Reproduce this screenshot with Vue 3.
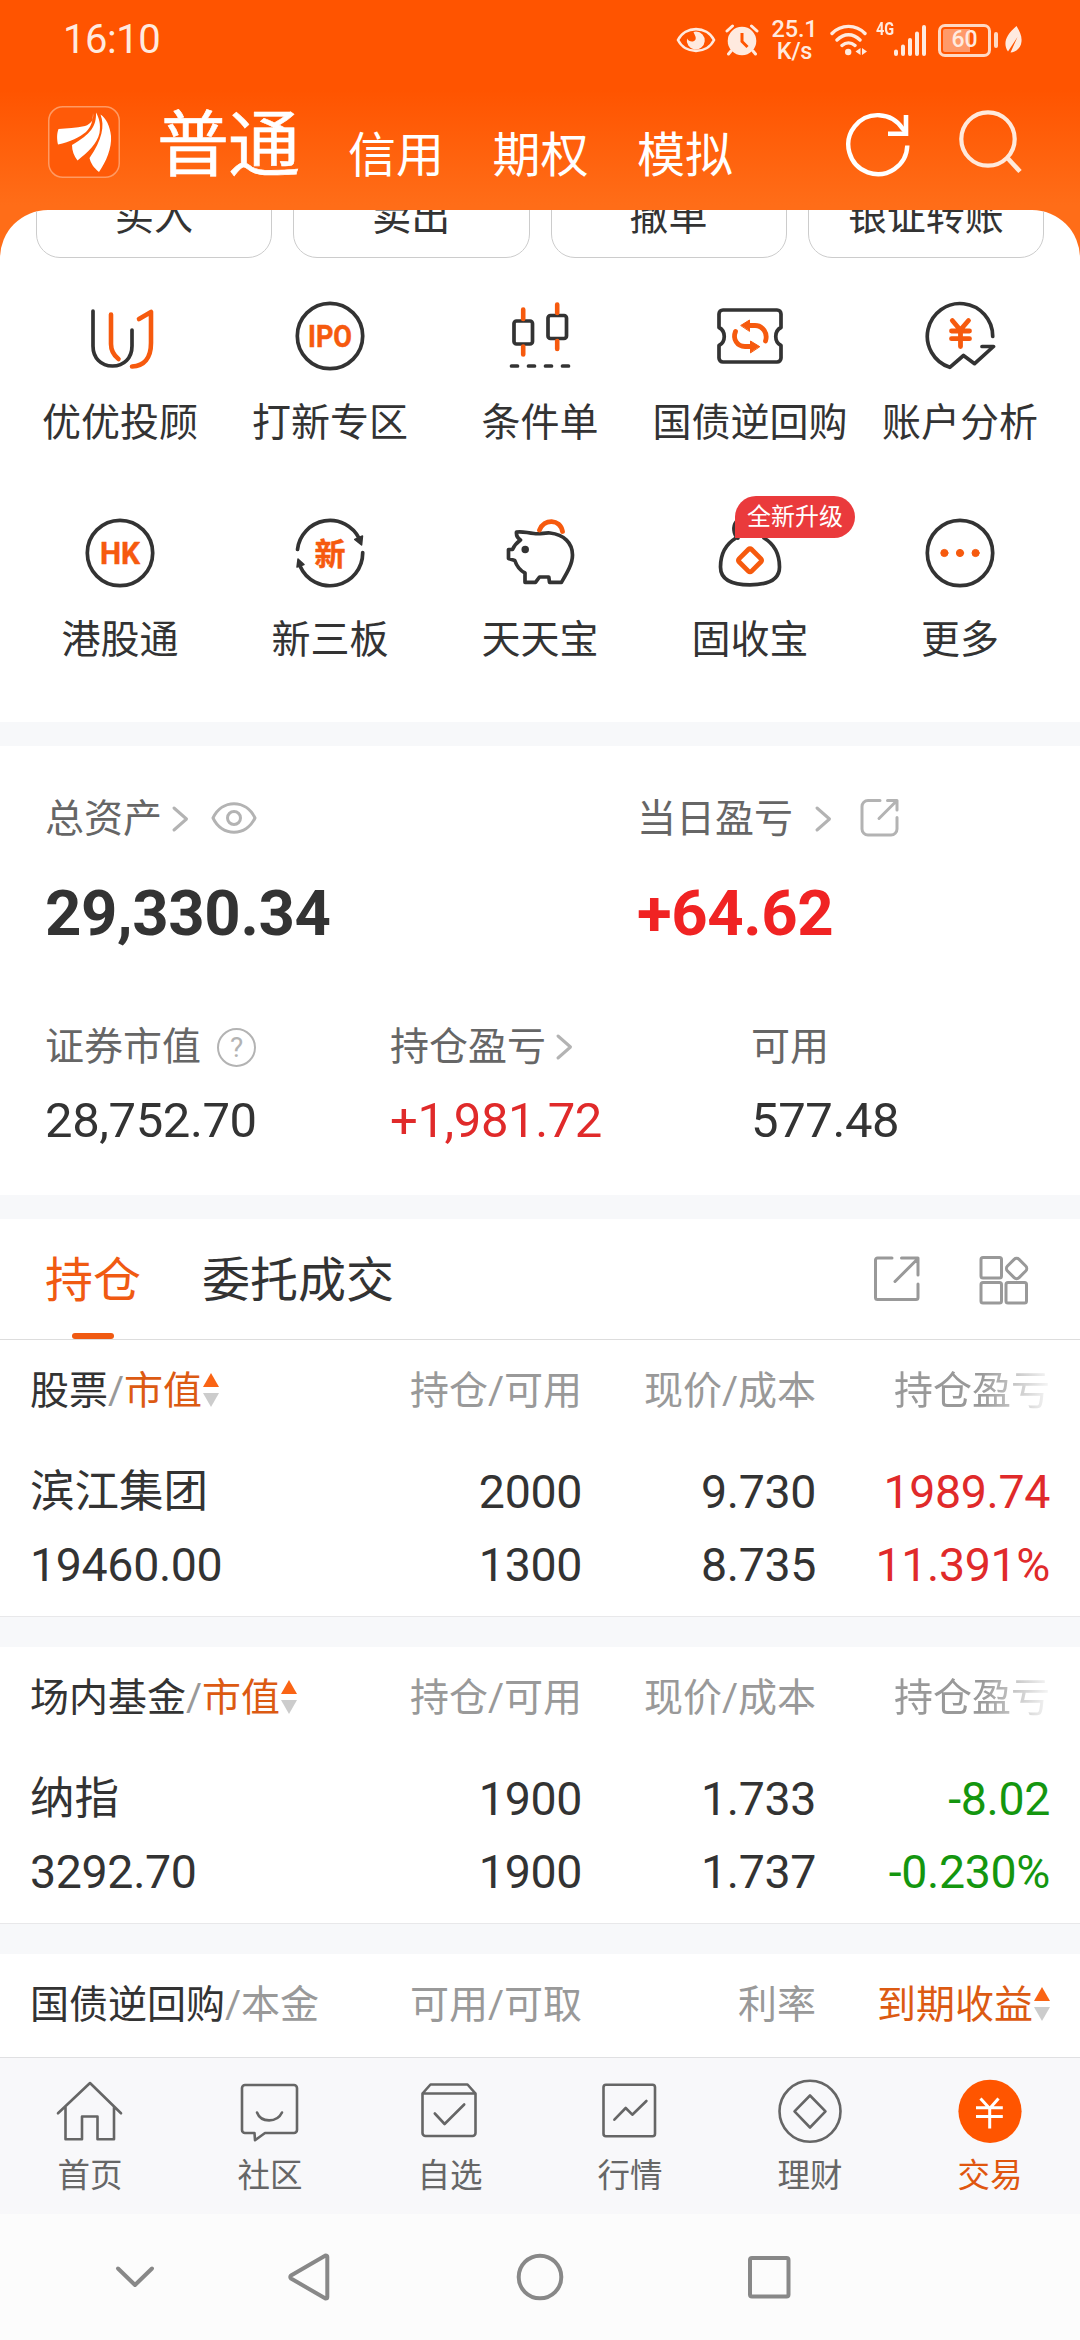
<script setup>
const accountTabs = ['信用', '期权', '模拟']
const actions = ['买入', '卖出', '撤单', '银证转账']

const ring = '<circle cx="36" cy="36" r="32.7"/>'
const services = [
  {
    label: '优优投顾',
    icon: '<path d="M9 11V46C9 58 17 66 28.5 66S48 58 48 46V30"/><g class="hot"><path d="M27 14.5V44c0 6 3 11.500 7.500 15"/><path d="M55 19L67 12V43C67 58 60 66 48 66.500"/></g>'
  },
  {
    label: '打新专区',
    icon: ring + '<text class="word" x="36" y="47.200" font-size="32" textLength="44" lengthAdjust="spacingAndGlyphs">IPO</text>'
  },
  {
    label: '条件单',
    icon: '<rect x="10" y="21" width="18.500" height="23" rx="2.500"/><rect x="44" y="15.500" width="18.500" height="23" rx="2.500"/><g class="hot"><path d="M19.200 9.500V19M19.200 46.500V54.500M53.200 4.500V13M53.200 41V49"/></g><path d="M7.500 66h6M24.500 66h6M41.500 66h6M58.500 66h6"/>'
  },
  {
    label: '国债逆回购',
    icon: '<path d="M9 10H63a4 4 0 0 1 4 4V27.500C60 31 60 42 67 45.500V58a4 4 0 0 1-4 4H9a4 4 0 0 1-4-4V45.500C12 42 12 31 5 27.500V14a4 4 0 0 1 4-4z"/><g class="hot bold"><path d="M34 25.500H41C49 25.500 54 33.500 51.500 41"/><path d="M21.500 31.500C18.500 39 23 46.500 31 46.500H38"/></g><path class="hotfill" d="M27 25.300L35.500 20V31zM45.500 46.500L36.500 41V52.500z"/>'
  },
  {
    label: '账户分析',
    icon: '<path d="M68.700 36.500A32.700 32.700 0 1 0 25.800 67.300L39.500 55.500L50.600 63.700L69.500 46.500H58"/><g class="hot bold"><path d="M28.300 20.500L36.300 30L44.500 20.500M27.500 31H45.500M27.500 38.700H45.500M36.500 31V46.500"/></g>'
  },
  {
    label: '港股通',
    icon: ring + '<text class="word" x="36" y="47.200" font-size="32" textLength="40" lengthAdjust="spacingAndGlyphs">HK</text>'
  },
  {
    label: '新三板',
    icon: '<path d="M3.500 32.500A32.700 32.700 0 0 1 65.500 22"/><path d="M68.700 35.500A32.700 32.700 0 0 1 6 49"/><path class="inkfill" d="M60.700 22.500L68.500 19L67.600 28zM4 42L10 47.500L3 50z"/><text class="word han" x="36" y="47.500" font-size="31">新</text>'
  },
  {
    label: '天天宝',
    icon: '<path d="M12.500 15C19 14 23 16 30 16.500C37 17.500 40 15.500 46 16C60 17.500 68.500 26 68.500 38C68.500 47 63 56 57.500 65.300H45.500L44.800 60H35.500L31.500 65.300H21V56C17 54 13 50 10.800 43.500L4.500 41.500V32.500H8.500C10 29 13 25.500 16.500 23C13.500 21 12 19 12.500 15z"/><circle class="inkfill" cx="21.200" cy="32.500" r="3"/><g class="hot bold"><path d="M35.500 13C40 1.500 56 1.500 58.500 14.500"/></g>'
  },
  {
    label: '固收宝',
    badge: '全新升级',
    icon: '<path d="M24 21C19 17 19 9 22 5"/><path d="M50 21C60 27 65.500 37 65.500 50C65.500 62 56 67.800 36 67.800S6.500 62 6.500 50C6.500 37 12 27 22 21"/><g class="hot bold"><rect x="27.200" y="34.500" width="17.600" height="17.600" rx="2" transform="rotate(45 36 43.300)"/></g>'
  },
  {
    label: '更多',
    icon: ring + '<g class="hotfill"><circle cx="20.400" cy="36" r="3.600"/><circle cx="36" cy="36" r="3.600"/><circle cx="51.600" cy="36" r="3.600"/></g>'
  }
]

const sections = [
  {
    title: '股票', sub: '市值', sorted: true,
    heads: ['持仓/可用', '现价/成本', '持仓盈亏'],
    rows: [
      ['滨江集团', '2000', '9.730', '1989.74'],
      ['19460.00', '1300', '8.735', '11.391%']
    ],
    tone: 'up'
  },
  {
    title: '场内基金', sub: '市值', sorted: true,
    heads: ['持仓/可用', '现价/成本', '持仓盈亏'],
    rows: [
      ['纳指', '1900', '1.733', '-8.02'],
      ['3292.70', '1900', '1.737', '-0.230%']
    ],
    tone: 'down'
  },
  {
    title: '国债逆回购', sub: '本金', sorted: false,
    heads: ['可用/可取', '利率', '到期收益'],
    rows: [],
    tone: ''
  }
]

const tabs = [
  { label: '首页', icon: '<path d="M4 38.300L36 8L67 38.300M11.500 32V64.200H28V41.500H43.500V64.200H60V32"/>' },
  { label: '社区', icon: '<path d="M11 10H60a3 3 0 0 1 3 3V55a3 3 0 0 1-3 3H31L21 65.200L20.500 58H11a3 3 0 0 1-3-3V13a3 3 0 0 1 3-3z"/><path d="M23 37.500C27 48 43 48 48 37.500"/>' },
  { label: '自选', icon: '<path d="M8.500 18.500H61.500V58a3 3 0 0 1-3 3H11.500a3 3 0 0 1-3-3zM8.500 18.500L16.500 9.500H53.500L61.500 18.500M20.800 38.500L30.600 49L50.200 29.500"/>' },
  { label: '行情', icon: '<rect x="9.500" y="9.700" width="51.500" height="51.500" rx="2.500"/><path d="M20.400 44.700L31.700 33L38.300 39.700L52.400 26"/>' },
  { label: '理财', icon: '<circle cx="36" cy="36.300" r="30.500"/><path d="M36 20.500L51.500 36.300L36 52.500L20.500 36.300z"/>' },
  { label: '交易', active: true, icon: '<circle class="disc" cx="36" cy="36.300" r="31.600"/><path class="yen" d="M26.500 23.500L35.700 33.500L44.500 23.500M22 32.800H48.800M22 41.600H48.800M35.700 33V53.500"/>' }
]
</script>

<template>
  <div class="screen">
    <header class="top">
      <div class="status">
        <span class="clock">16:10</span>
        <div class="indicators">
          <svg class="i-eye" width="40" height="30" viewBox="0 0 40 30">
            <path d="M2 15C9 .5 31 .5 38 15C31 29.500 9 29.500 2 15z" fill="none" stroke="#ffeadf" stroke-width="2.600" />
            <path d="M20 6.500A9 9 0 1 1 11 13.500C12.500 16.500 17.500 18 19.500 14.500C20.500 12 18.500 10 17.500 7z" fill="#ffeadf" />
          </svg>
          <svg class="i-alarm" width="34" height="32" viewBox="0 0 34 32">
            <circle cx="17" cy="17" r="14.300" fill="#ffeadf" />
            <path d="M2 7L7.500 2M32 7L26.500 2M6 27L3.500 30M28 27L30.500 30" stroke="#ffeadf" stroke-width="3" stroke-linecap="round" />
            <path d="M17 9V17.500L22.500 23" fill="none" stroke="#ff5400" stroke-width="3" />
          </svg>
          <div class="speed"><span>25.1</span><span>K/s</span></div>
          <svg class="i-wifi" width="38" height="32" viewBox="0 0 38 32">
            <g fill="none" stroke="#ffeadf" stroke-width="3.400" stroke-linecap="round">
              <path d="M2 9.500C11 0 26 0 35 9.500M7 16C14 9 23 9 30 16M12 21.500C16 18 21 18 25 21.500" />
            </g>
            <circle cx="18.200" cy="28" r="3.200" fill="#ffeadf" />
            <path d="M30.500 24V31L25.500 27.500zM32 31V24L37 27.500z" fill="#ffeadf" />
          </svg>
          <span class="gen">4G</span>
          <svg class="i-signal" width="34" height="32" viewBox="0 0 34 32">
            <path d="M3 27.500V30M10 22.500V30M17 16V30M24 9.500V30M31 3V30" stroke="#ffeadf" stroke-width="4" stroke-linecap="round" />
          </svg>
          <div class="battery"><span>60</span></div>
          <svg class="i-leaf" width="19" height="30" viewBox="0 0 19 30">
            <path d="M12.500 1C16 7 18 11 17.500 16.500C17 23 12 27 6.500 27.500L13.500 12L4 26.500C-1 19 1 11 12.500 1z" fill="#ffeadf" />
          </svg>
        </div>
      </div>

      <div class="titlebar">
        <svg class="logo" width="72" height="72" viewBox="0 0 72 72">
          <rect x=".75" y=".75" width="70.500" height="70.500" rx="14" fill="#ff5a08" stroke="#ff9a63" stroke-width="1.500" />
          <path d="M45 7C46 14 43 18 37 20C28 22 19 22 10.500 23C8.500 28 9 34 10 38.500C22 36 32 31 38 26C43 21 45 15 45 7z" fill="#fff" />
          <path d="M48 6.500C48.500 20 43 28 24 39C24 45 26 50 29.500 54.500C40 46 49 38 51.500 27C53 18 51 12 48 6.500z" fill="#fff" />
          <path d="M52.500 8.500C57 20 54 34 41.500 52C42.500 57 46 62 51 66C58 56 64 42 63 30C62 20 58 12 52.500 8.500z" fill="#fff" />
        </svg>
        <h1>普通</h1>
        <nav class="accounts"><span v-for="t in accountTabs" :key="t">{{ t }}</span></nav>
        <svg class="refresh" width="68" height="68" viewBox="0 0 68 68">
          <path d="M62.300 35.500A29.500 29.500 0 1 1 57.500 18.500L61.500 23" fill="none" stroke="#fff" stroke-width="4.400" />
          <path d="M61 5V23.800H43" fill="none" stroke="#fff" stroke-width="4.600" />
        </svg>
        <svg class="search" width="68" height="68" viewBox="0 0 68 68">
          <circle cx="31" cy="30" r="26.700" fill="none" stroke="#ffe9db" stroke-width="4.200" />
          <path d="M50 48.500L63 62.500" stroke="#ffe9db" stroke-width="4.600" />
        </svg>
      </div>
    </header>

    <main class="sheet">
      <div class="actions"><span v-for="a in actions" :key="a">{{ a }}</span></div>

      <section class="services">
        <div v-for="s in services" :key="s.label" class="service">
          <svg class="glyph" width="72" height="72" viewBox="0 0 72 72" v-html="s.icon"></svg>
          <span>{{ s.label }}</span>
          <em v-if="s.badge" class="badge">{{ s.badge }}</em>
        </div>
      </section>

      <section class="assets">
        <div class="summary">
          <div>
            <div class="label">总资产
              <svg class="chev" width="18" height="28" viewBox="0 0 18 28"><path d="M3 3L15.500 14L3 25" /></svg>
              <svg class="eye" width="46" height="34" viewBox="0 0 46 34"><path d="M2 17C11-2 35-2 44 17C35 36 11 36 2 17z" /><circle cx="23" cy="17" r="6.500" /></svg>
            </div>
            <strong>29,330.34</strong>
          </div>
          <div>
            <div class="label">当日盈亏
              <svg class="chev wide" width="18" height="28" viewBox="0 0 18 28"><path d="M3 3L15.500 14L3 25" /></svg>
              <svg class="ext" width="40" height="40" viewBox="0 0 40 40"><path d="M20 2.500H8A6 6 0 0 0 2 8.500V31A6 6 0 0 0 8 37H31A6 6 0 0 0 37 31V19.500M19 20.500L36 3.500M27.500 2.500H37V12" /></svg>
            </div>
            <strong class="gain">+64.62</strong>
          </div>
        </div>
        <div class="breakdown">
          <div>
            <div class="label">证券市值
              <span class="help">?</span>
            </div>
            <b>28,752.70</b>
          </div>
          <div>
            <div class="label">持仓盈亏
              <svg class="chev" width="18" height="28" viewBox="0 0 18 28"><path d="M3 3L15.500 14L3 25" /></svg>
            </div>
            <b class="up">+1,981.72</b>
          </div>
          <div>
            <div class="label">可用</div>
            <b>577.48</b>
          </div>
        </div>
      </section>

      <div class="switch">
        <span class="on">持仓</span>
        <span>委托成交</span>
        <svg class="share" width="48" height="48" viewBox="0 0 48 48"><path d="M19 3H4.500A2 2 0 0 0 2.500 5V42.500A2 2 0 0 0 4.500 44.500H43A2 2 0 0 0 45 42.500V29M22 26.500L44 4.500M28.500 3H45V20" /></svg>
        <svg class="layout" width="50" height="50" viewBox="0 0 50 50"><rect x="2" y="2.500" width="20.500" height="20.500" rx="2" /><rect x="2" y="27.500" width="20.500" height="20.500" rx="2" /><rect x="27" y="27.500" width="20.500" height="20.500" rx="2" /><rect x="29.400" y="5.300" width="16.400" height="16.400" rx="3.500" transform="rotate(45 37.600 13.500)" /></svg>
      </div>

      <section v-for="s in sections" :key="s.title" class="holding">
        <div class="line head">
          <span class="name">{{ s.title }}<i>/</i><i :class="{ hot: s.sorted }">{{ s.sub }}</i><svg v-if="s.sorted" class="sort" width="16" height="34" viewBox="0 0 16 34"><path d="M8 0L16 14H0z" fill="#fa6414" /><path d="M0 20H16L8 34z" fill="#ccc" /></svg></span>
          <span>{{ s.heads[0] }}</span>
          <span>{{ s.heads[1] }}</span>
          <span :class="s.sorted ? 'fade' : 'hot'">{{ s.heads[2] }}<svg v-if="!s.sorted" class="sort" width="16" height="34" viewBox="0 0 16 34"><path d="M8 0L16 14H0z" fill="#fa6414" /><path d="M0 20H16L8 34z" fill="#ccc" /></svg></span>
        </div>
        <div v-for="r in s.rows" :key="r[0]" class="line value">
          <span :class="{ title: r === s.rows[0] }">{{ r[0] }}</span>
          <span>{{ r[1] }}</span>
          <span>{{ r[2] }}</span>
          <span :class="s.tone">{{ r[3] }}</span>
        </div>
      </section>
    </main>

    <nav class="tabbar">
      <div v-for="t in tabs" :key="t.label" :class="{ active: t.active }">
        <svg class="tab-glyph" width="72" height="72" viewBox="0 0 72 72" v-html="t.icon"></svg>
        <span>{{ t.label }}</span>
      </div>
    </nav>

    <footer class="keys">
      <svg class="k1" width="48" height="48" viewBox="0 0 48 48"><path d="M7 15.500L24 32L41 15.500" /></svg>
      <svg class="k2" width="48" height="48" viewBox="0 0 48 48"><path d="M40.500 2.500L6 22.500Q4.500 24 6 25.500L40.500 45.500Q42.300 45.500 42.300 44V4Q42.300 2.500 40.500 2.500z" /></svg>
      <svg class="k3" width="48" height="48" viewBox="0 0 48 48"><circle cx="24" cy="24" r="21.300" /></svg>
      <svg class="k4" width="48" height="48" viewBox="0 0 48 48"><rect x="5" y="5" width="38.500" height="38.500" rx="2" /></svg>
    </footer>
  </div>
</template>

<style>
.glyph { fill: none; stroke: #333; stroke-width: 3.700; stroke-linecap: round; stroke-linejoin: round; }
.glyph .hot { stroke: #f65a0e; stroke-width: 4.600; }
.glyph .hot.bold { stroke-width: 4.800; }
.glyph .hotfill { fill: #f65a0e; stroke: #f65a0e; stroke-width: 1; }
.glyph .inkfill { fill: #333; stroke: #333; stroke-width: 1.500; }
.glyph .word { fill: #f65a0e; stroke: #f65a0e; stroke-width: .5; font-family: Roboto, sans-serif; font-weight: 700; text-anchor: middle; }
.glyph .han { font-family: "Noto Sans CJK SC", sans-serif; }
.tab-glyph { fill: none; stroke: #666; stroke-width: 2.600; stroke-linecap: round; stroke-linejoin: round; }
.tab-glyph .disc { fill: #f50; stroke: none; }
.tab-glyph .yen { stroke: #fff; stroke-linecap: butt; stroke-width: 3; }
</style>

<style scoped>
.screen {
  width: 1080px;
  height: 2340px;
  display: flex;
  flex-direction: column;
  overflow: hidden;
  background: linear-gradient(#ff5400 0, #ff5400 90px, #ff6d18 205px, #ff6d18 100%);
  color: #333;
  font-family: Roboto, "Noto Sans CJK SC", sans-serif;
}
svg { display: block; flex: none; }
i, em { font-style: normal; }

.top { height: 210px; flex: none; }
.status { height: 80px; padding: 0 57px 0 63px; display: flex; align-items: center; justify-content: space-between; color: #ffeadf; }
.clock { font-size: 40px; line-height: 80px; letter-spacing: -.5px; }
.indicators { display: flex; align-items: center; height: 76px; }
.i-alarm { margin-left: 9px; }
.speed { margin-left: 14px; width: 43px; display: flex; flex-direction: column; align-items: center; font-size: 23.500px; line-height: 22px; font-weight: 500; letter-spacing: -.2px; }
.i-wifi { margin-left: 14px; }
.gen { margin-left: 8px; width: 17px; font-size: 19px; line-height: 20px; font-weight: 700; align-self: flex-start; margin-top: 17px; transform: scaleX(.76); transform-origin: left; }
.i-signal { margin-left: 0; }
.battery { position: relative; margin: 0 13px 0 11px; width: 53px; height: 33px; box-sizing: border-box; border: 3px solid #ffd9c4; border-radius: 7px; background: linear-gradient(to right, #ff9a6a 62%, transparent 62%) content-box; padding: 2px; display: flex; align-items: center; justify-content: center; }
.battery span { font-size: 23px; font-weight: 500; line-height: 24px; }
.battery::after { content: ""; position: absolute; left: 53px; top: 5px; width: 4px; height: 16px; border-radius: 2px; background: #ffd9c4; }

.titlebar { height: 130px; padding: 0 55px 0 48px; display: flex; align-items: flex-start; color: #fff; }
.logo { margin-top: 26px; }
h1 { margin: 11px 0 0 37px; font-size: 72px; line-height: 110px; font-weight: 400; letter-spacing: -1px; -webkit-text-stroke: .6px #fff; }
.accounts { margin: 44px 0 0 49px; display: flex; gap: 48.500px; font-size: 48px; line-height: 64px; }
.refresh { margin: 30px 0 0 auto; }
.search { margin: 29px 0 0 44px; }

.sheet { flex: none; height: 1847px; overflow: hidden; border-radius: 48px 48px 0 0; background: #fff; }
.actions { margin: -42px 36px 0; display: grid; grid-template-columns: repeat(4, 1fr); gap: 21px; }
.actions span { height: 90px; box-sizing: border-box; border: 1.500px solid #ccc; border-radius: 24px; padding-top: 4px; text-align: center; font-size: 39px; line-height: 88px; }

.services { height: 464px; box-sizing: border-box; padding: 42px 15px 0; display: grid; grid-template-columns: repeat(5, 210px); grid-auto-rows: 217px; }
.service { position: relative; display: flex; flex-direction: column; align-items: center; }
.service > span { margin-top: 26px; font-size: 39px; line-height: 50px; white-space: nowrap; }
.badge { position: absolute; left: 90px; top: -21px; width: 120px; height: 42px; border-radius: 21px 21px 21px 0; background: #ea3a3c; color: #fff; font-size: 24px; line-height: 43px; text-align: center; }

.assets { height: 497px; box-sizing: border-box; border: solid #f7f8fa; border-width: 24px 0; padding: 43px 45px 0; }
.summary { display: grid; grid-template-columns: 592px 1fr; height: 228px; }
.breakdown { display: grid; grid-template-columns: 345px 361px 1fr; }
.label { height: 60px; display: flex; align-items: center; font-size: 39px; line-height: 60px; color: #666; }
.label svg { fill: none; stroke: #b3b3b3; stroke-width: 3; stroke-linecap: round; stroke-linejoin: round; }
.chev { margin-left: 9px; }
.chev.wide { margin-left: 21px; }
.eye { margin-left: 22px; margin-top: -3px; }
.ext { margin-left: 28px; margin-top: -2px; }
.help { margin-left: 16px; width: 39px; height: 39px; box-sizing: border-box; border: 2.500px solid #b3b3b3; border-radius: 50%; color: #b3b3b3; font-size: 28px; line-height: 35px; text-align: center; }
strong { display: block; font-size: 63.500px; line-height: 80px; margin-top: 25px; letter-spacing: -.4px; font-weight: 700; }
b { display: block; font-size: 49px; line-height: 60px; margin-top: 14px; font-weight: 400; letter-spacing: -.4px; }
.gain { color: #f02323; }
.up { color: #e02a2a; }
.down { color: #14960f; }

.switch { height: 121px; box-sizing: border-box; border-bottom: 1px solid #ddd; padding: 0 51px 0 45px; display: flex; align-items: center; font-size: 48px; }
.switch span { position: relative; line-height: 116px; padding-top: 4px; margin-right: 61px; }
.switch .on { color: #f05a12; }
.switch .on::after { content: ""; position: absolute; left: 27px; bottom: 0; width: 42px; height: 6px; border-radius: 3px; background: #f05a12; }
.switch svg { fill: none; stroke: #999; stroke-width: 3; stroke-linecap: round; stroke-linejoin: round; }
.share { margin-left: auto; }
.layout { margin: 2px 0 0 58px; }

.holding { height: 307px; box-sizing: border-box; border-bottom: 30px solid #f7f8fa; padding: 0 30px; box-shadow: inset 0 -1px #e8e8ea; }
.line { display: grid; grid-template-columns: 330px 222px 234px 234px; text-align: right; white-space: nowrap; }
.line > :first-child { text-align: left; }
.head { height: 116px; font-size: 39px; line-height: 102px; color: #999; }
.head > span { height: 102px; }
.name { color: #333; display: flex; align-items: center; }
.name i { color: #999; }
.name .hot, .hot { color: #dc5a12; }
.head > .hot { display: flex; align-items: center; justify-content: flex-end; }
.sort { margin-left: 1px; margin-top: -2px; }
.fade { -webkit-mask-image: linear-gradient(to right, #000 calc(100% - 68px), rgba(0, 0, 0, .08)); mask-image: linear-gradient(to right, #000 calc(100% - 68px), rgba(0, 0, 0, .08)); }
.value { height: 73px; font-size: 46.500px; line-height: 73px; letter-spacing: -.35px; }
.value .title { font-size: 44.500px; letter-spacing: 0; }

.tabbar { flex: none; height: 157px; box-sizing: border-box; border-top: 1px solid #e0e0e2; background: #f8f8fa; padding-top: 17px; display: grid; grid-template-columns: repeat(6, 1fr); }
.tabbar div { display: flex; flex-direction: column; align-items: center; font-size: 32.500px; line-height: 44px; color: #666; }
.tabbar span { margin-top: 7px; }
.tabbar .active { color: #e0560f; }
.keys { flex: 1; background: #fcfcfc; padding-left: 111px; display: flex; align-items: center; }
.keys svg { fill: none; stroke: #888; stroke-width: 4; stroke-linecap: round; stroke-linejoin: round; }
.k2 { margin-left: 126px; }
.k3 { margin-left: 183px; }
.k4 { margin-left: 181px; }
</style>
